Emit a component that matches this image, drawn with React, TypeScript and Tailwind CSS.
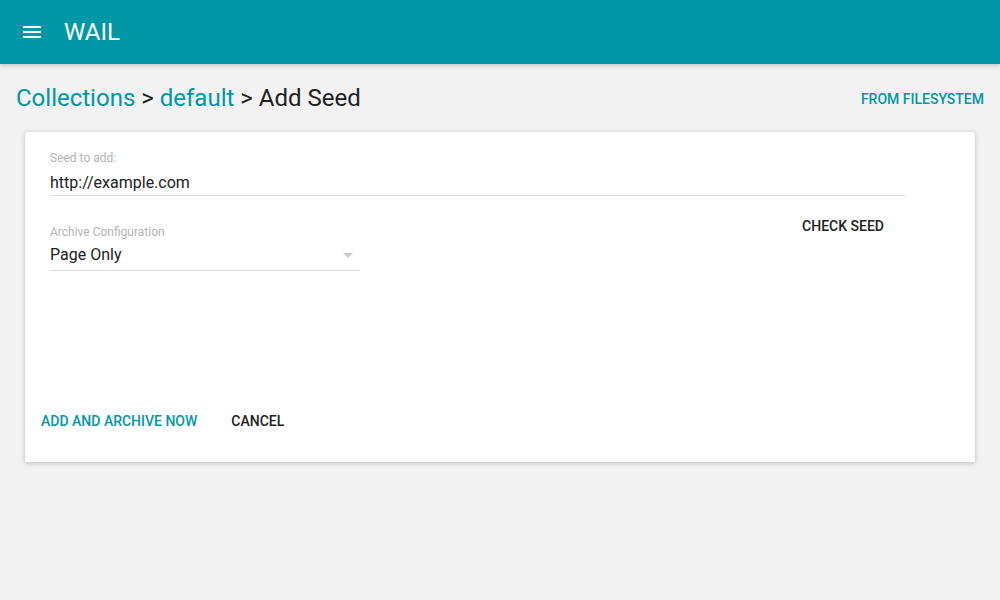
import React from 'react';

const App: React.FC = () => {
  return (
    <div className="min-h-screen w-full bg-[#f2f2f2] font-['Roboto',sans-serif] text-[#212121]">
      {/* App bar */}
      <header className="h-16 bg-[#0097a7] flex items-center shadow-[0_1px_6px_rgba(0,0,0,0.12),0_1px_4px_rgba(0,0,0,0.12)] relative z-10">
        <button className="w-12 h-12 ml-2 flex items-center justify-center">
          <svg width="18" height="12" viewBox="0 0 18 12" fill="white">
            <rect x="0" y="0" width="18" height="2" />
            <rect x="0" y="5" width="18" height="2" />
            <rect x="0" y="10" width="18" height="2" />
          </svg>
        </button>
        <h1 className="ml-2 text-white text-[24px] leading-[64px] font-normal">WAIL</h1>
      </header>

      {/* Breadcrumb row */}
      <div className="flex items-center justify-between pl-4 pr-4 h-[68px]">
        <div className="text-[24px] leading-8">
          <span className="text-[#0097a7]">Collections</span>
          <span> &gt; </span>
          <span className="text-[#0097a7]">default</span>
          <span> &gt; Add Seed</span>
        </div>
        <button className="mt-[2px] text-[14px] font-medium text-[#0097a7] uppercase">From Filesystem</button>
      </div>

      {/* Card */}
      <div className="mx-[25px] h-[330px] bg-white rounded-[2px] shadow-[0_1px_6px_rgba(0,0,0,0.12),0_1px_4px_rgba(0,0,0,0.12)] flex flex-col pt-[18px] pb-[23px]">
        <div className="pl-[25px] w-[880px]">
          <div className="text-[12px] leading-4 text-[#b3b3b3]">Seed to add:</div>
          <div className="mt-[5px] text-[16px] leading-6 border-b border-[#e0e0e0]">http://example.com</div>
          <div className="flex justify-between">
            <div className="w-[310px] mt-[28px]">
              <div className="text-[12px] leading-4 text-[#b3b3b3]">Archive Configuration</div>
              <div className="mt-[3px] flex items-center justify-between pb-[3px] border-b border-[#e0e0e0]">
                <span className="text-[16px] leading-6">Page Only</span>
                <svg width="10" height="5" viewBox="0 0 10 5" className="mr-[7px]">
                  <path d="M0 0 L10 0 L5 5 Z" fill="#cccccc" />
                </svg>
              </div>
            </div>
            <button className="mt-3 mr-[5px] h-9 px-4 text-[14px] font-medium uppercase text-[#212121]">Check Seed</button>
          </div>
        </div>
        <div className="mt-auto flex items-center gap-[2px]">
          <button className="h-9 px-4 text-[14px] font-medium uppercase text-[#0097a7]">Add and Archive Now</button>
          <button className="h-9 px-4 text-[14px] font-medium uppercase text-[#212121]">Cancel</button>
        </div>
      </div>
    </div>
  );
};

export default App;
